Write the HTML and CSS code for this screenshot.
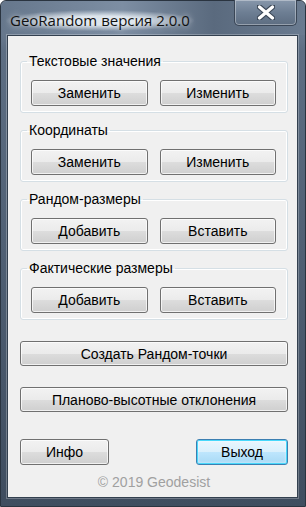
FILE: index.html
```html
<!DOCTYPE html>
<html lang="ru">
<head>
    <meta charset="UTF-8">
    <meta name="viewport" content="width=device-width, initial-scale=1.0">
    <title>GeoRandom версия 2.0.0</title>
    <link rel="stylesheet" href="styles.css">
</head>
<body>
    <div class="window">
        <div class="titlebar">
            <span class="title">GeoRandom версия 2.0.0</span>
            <button class="close" type="button" aria-label="Закрыть">
                <svg width="18" height="15" viewBox="0 0 18 15">
                    <path d="M2 1.5 L16 13.5 M16 1.5 L2 13.5" stroke="#3a4656" stroke-width="5.5" stroke-linecap="round"/>
                    <path d="M2.5 2 L15.5 13 M15.5 2 L2.5 13" stroke="#fff" stroke-width="3.2" stroke-linecap="round"/>
                </svg>
            </button>
        </div>

        <div class="client">
            <fieldset class="group">
                <legend>Текстовые значения</legend>
                <div class="pair">
                    <button class="btn" type="button">Заменить</button>
                    <button class="btn" type="button">Изменить</button>
                </div>
            </fieldset>

            <fieldset class="group">
                <legend>Координаты</legend>
                <div class="pair">
                    <button class="btn" type="button">Заменить</button>
                    <button class="btn" type="button">Изменить</button>
                </div>
            </fieldset>

            <fieldset class="group">
                <legend>Рандом-размеры</legend>
                <div class="pair">
                    <button class="btn" type="button">Добавить</button>
                    <button class="btn" type="button">Вставить</button>
                </div>
            </fieldset>

            <fieldset class="group">
                <legend>Фактические размеры</legend>
                <div class="pair">
                    <button class="btn" type="button">Добавить</button>
                    <button class="btn" type="button">Вставить</button>
                </div>
            </fieldset>

            <button class="btn wide first" type="button">Создать Рандом-точки</button>
            <button class="btn wide second" type="button">Планово-высотные отклонения</button>

            <div class="footer">
                <button class="btn small" type="button">Инфо</button>
                <button class="btn small default" type="button">Выход</button>
            </div>

            <div class="copyright">© 2019 Geodesist</div>
        </div>
    </div>
</body>
</html>
```

FILE: styles.css
```css
html, body {
    margin: 0;
    padding: 0;
}
body {
    width: 306px;
    height: 507px;
    overflow: hidden;
    font-family: "Liberation Sans", Arial, sans-serif;
}
.window {
    height: 507px;
    box-sizing: border-box;
    display: flex;
    flex-direction: column;
    background: linear-gradient(180deg, #7a8ba0 0%, #5d6e83 10%, #4f5f73 50%, #3f4d5f 100%);
    border: 1px solid #2a3440;
    border-radius: 6px 6px 0 0;
}
.titlebar {
    height: 34px;
    display: flex;
    justify-content: space-between;
    align-items: flex-start;
    background: linear-gradient(90deg, #66778c 0%, #7d8ea3 40%, #5a6a7e 70%, #6a7b90 100%);
    border-radius: 6px 6px 0 0;
}
.title {
    margin: 9px 0 0 5px;
    padding: 0 4px;
    font-family: "Open Sans", "Noto Sans", sans-serif;
    font-size: 15px;
    line-height: 21px;
    color: #111;
    background: radial-gradient(ellipse at center, rgba(235, 242, 248, 0.85) 30%, rgba(235, 242, 248, 0) 72%);
    text-shadow: 0 0 6px rgba(255, 255, 255, 0.9);
}
.close {
    width: 63px;
    height: 26px;
    margin: -1px 8px 0 0;
    padding: 0;
    display: flex;
    align-items: center;
    justify-content: center;
    background: linear-gradient(180deg, #8797ab 0%, #6d7e93 50%, #5d6d81 100%);
    border: 1px solid #3a4656;
    border-top: none;
    border-radius: 0 0 5px 5px;
    box-shadow: inset 0 0 0 1px rgba(255, 255, 255, 0.35);
}
.client {
    flex: 1;
    margin: 0 7px 8px 6px;
    padding: 18px 9px 0 12px;
    display: flex;
    flex-direction: column;
    background: #f0f0f0;
    border: 1px solid #33404f;
    box-shadow: 0 0 0 1px rgba(255, 255, 255, 0.25);
    font-size: 14px;
    color: #000;
}
.group {
    margin: 0 0 10px;
    padding: 11px 11px 6px 10px;
    border: 1px solid #d5dfe5;
    border-radius: 3px;
    box-shadow: inset 0 0 0 1px #fff;
}
.group legend {
    margin-left: -4px;
    padding: 0 2px;
    font-size: 14px;
    line-height: 15px;
}
.pair {
    display: grid;
    grid-template-columns: 1fr 1fr;
    gap: 12px;
}
.btn {
    height: 26px;
    padding: 0;
    font-family: "Liberation Sans", Arial, sans-serif;
    font-size: 14px;
    color: #000;
    border: 1px solid #707070;
    border-radius: 3px;
    background: linear-gradient(180deg, #f2f2f2 0%, #ebebeb 50%, #dddddd 50%, #cfcfcf 100%);
    box-shadow: inset 0 0 0 1px rgba(255, 255, 255, 0.7);
}
.wide {
    width: 268px;
    height: 25px;
}
.wide.first {
    margin-top: 11px;
}
.wide.second {
    margin-top: 21px;
}
.footer {
    margin-top: 27px;
    display: flex;
    justify-content: space-between;
}
.small.btn {
    width: 89px;
}
.small.default {
    width: 92px;
    border-color: #3c7fb1;
    background: linear-gradient(180deg, #eaf6fd 0%, #d9f0fc 50%, #bee6fd 50%, #a7d9f5 100%);
    box-shadow: inset 0 0 0 1px #48d8fb, inset 0 0 3px 1px rgba(255, 255, 255, 0.6);
}
.copyright {
    margin-top: 9px;
    text-align: center;
    font-size: 14px;
    color: #a0a0a0;
}
```
